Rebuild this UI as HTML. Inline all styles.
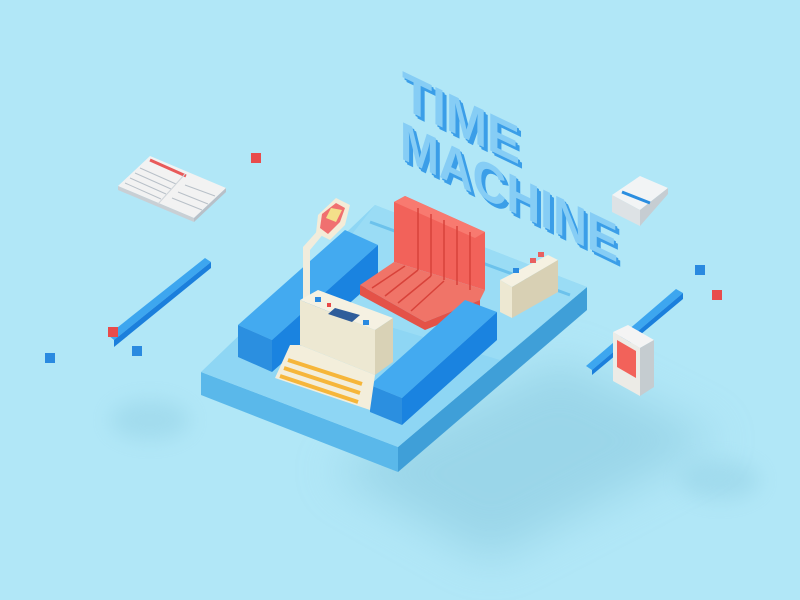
<!DOCTYPE html>
<html><head><meta charset="utf-8"><style>
html,body{margin:0;padding:0;width:800px;height:600px;overflow:hidden;background:#b1e7f7}
svg{display:block}
</style></head><body>
<svg width="800" height="600" viewBox="0 0 800 600" xmlns="http://www.w3.org/2000/svg">
<defs>
<filter id="b" x="-50%" y="-50%" width="200%" height="200%"><feGaussianBlur stdDeviation="22"/></filter>
<filter id="b2" x="-50%" y="-50%" width="200%" height="200%"><feGaussianBlur stdDeviation="10"/></filter>
</defs>
<rect width="800" height="600" fill="#b1e7f7"/>
<polygon points="330,470 560,360 720,440 490,560" fill="#8ccbe0" opacity="0.6" filter="url(#b)"/>
<ellipse cx="150" cy="420" rx="40" ry="20" fill="#8ccbe0" opacity="0.4" filter="url(#b2)"/>
<ellipse cx="720" cy="480" rx="40" ry="20" fill="#8ccbe0" opacity="0.4" filter="url(#b2)"/>

<polygon points="201,372 398,447 398,472 201,395" fill="#5ab8ea"/>
<polygon points="398,447 587,287 587,310 398,472" fill="#3f9fd8"/>
<polygon points="201,372 375,205 587,287 398,447" fill="#8ed6f4"/>
<polygon points="300,300 375,205 587,287 500,360" fill="#9adcf5"/>
<line x1="370" y1="222" x2="570" y2="295" stroke="#6cc2ec" stroke-width="3"/>

<polygon points="238,325 345,230 378,245 272,340" fill="#43aaf0"/>
<polygon points="238,325 272,340 272,372 238,357" fill="#2b8fe0"/>
<polygon points="272,340 378,245 378,278 272,372" fill="#1a83e0"/>

<polygon points="303,247 310,247 310,300 303,300" fill="#f1ecdc"/>
<polygon points="303,247 320,228 325,232 310,250" fill="#f1ecdc"/>
<polygon points="318,215 336,198 350,205 345,225 330,240 316,233" fill="#f4ecd8"/>
<polygon points="322,214 336,203 345,208 340,222 328,234 320,228" fill="#f07070"/>
<polygon points="331,208 342,210 336,222 326,218" fill="#f4e08a"/>

<polygon points="394,202 405,196 485,232 485,290 394,262" fill="#f2625a"/>
<polygon points="394,202 405,196 485,232 475,238" fill="#f87a70"/>
<polygon points="360,285 394,262 485,290 480,300 425,322" fill="#f07468"/>
<polygon points="360,285 425,322 425,330 360,295" fill="#e45248"/>
<polygon points="425,322 480,300 480,308 425,330" fill="#e45248"/>
<g stroke="#d8423a" stroke-width="1.5">
<line x1="418" y1="208" x2="418" y2="270"/><line x1="431" y1="214" x2="431" y2="276"/>
<line x1="444" y1="220" x2="444" y2="280"/><line x1="457" y1="226" x2="457" y2="285"/><line x1="470" y1="232" x2="470" y2="290"/>
<line x1="372" y1="288" x2="405" y2="266"/><line x1="385" y1="296" x2="418" y2="270"/><line x1="398" y1="303" x2="431" y2="276"/><line x1="411" y1="311" x2="444" y2="281"/>
</g>

<polygon points="370,385 465,300 497,312 402,398" fill="#43aaf0"/>
<polygon points="370,385 402,398 402,425 370,412" fill="#2b8fe0"/>
<polygon points="402,398 497,312 497,340 402,425" fill="#1a83e0"/>

<polygon points="300,300 318,290 393,318 375,330" fill="#f5f1e2"/>
<polygon points="300,300 375,330 375,375 300,345" fill="#ede8d2"/>
<polygon points="375,330 393,318 393,362 375,375" fill="#d9d2b6"/>
<polygon points="290,345 300,345 375,375 370,410 275,378" fill="#f3eedb"/>
<g stroke="#f6b63a" stroke-width="4">
<line x1="288" y1="360" x2="362" y2="384"/><line x1="284" y1="368" x2="360" y2="393"/><line x1="280" y1="376" x2="358" y2="402"/>
</g>
<polygon points="335,308 360,315 352,322 328,314" fill="#2f5d9a"/>
<rect x="315" y="297" width="6" height="5" fill="#2a8ae0"/>
<rect x="327" y="303" width="4" height="4" fill="#e84848"/>
<rect x="363" y="320" width="6" height="5" fill="#2a8ae0"/>

<polygon points="500,280 548,255 558,260 512,287" fill="#f5f1e2"/>
<polygon points="500,280 512,287 512,318 500,312" fill="#ede8d2"/>
<polygon points="512,287 558,260 558,292 512,318" fill="#d8d0b4"/>
<rect x="513" y="268" width="6" height="5" fill="#2a8ae0"/>
<rect x="530" y="258" width="6" height="5" fill="#e86060"/>
<rect x="538" y="252" width="6" height="5" fill="#e86060"/>

<g font-family="'Liberation Sans',sans-serif" font-weight="bold" font-size="54">
<text transform="matrix(1,0.48,0,1,402,108)" fill="#3b9ee8" x="4" y="3" textLength="118" lengthAdjust="spacingAndGlyphs">TIME</text>
<text transform="matrix(1,0.48,0,1,402,108)" fill="#3b9ee8" x="2" y="1.5" textLength="118" lengthAdjust="spacingAndGlyphs">TIME</text>
<text transform="matrix(1,0.48,0,1,402,108)" fill="#86cdf5" textLength="118" lengthAdjust="spacingAndGlyphs">TIME</text>
<text transform="matrix(1,0.48,0,1,400,158)" fill="#3b9ee8" x="4" y="3" textLength="218" lengthAdjust="spacingAndGlyphs">MACHINE</text>
<text transform="matrix(1,0.48,0,1,400,158)" fill="#3b9ee8" x="2" y="1.5" textLength="218" lengthAdjust="spacingAndGlyphs">MACHINE</text>
<text transform="matrix(1,0.48,0,1,400,158)" fill="#86cdf5" textLength="218" lengthAdjust="spacingAndGlyphs">MACHINE</text>
</g>

<polygon points="118,186 150,156 226,188 194,218" fill="#f2f2f2"/>
<polygon points="118,186 194,218 194,222 118,190" fill="#c9cfd4"/>
<polygon points="194,218 226,188 226,192 194,222" fill="#b8c0c8"/>
<line x1="150" y1="160" x2="186" y2="176" stroke="#e85a5a" stroke-width="3"/>
<g stroke="#b8c0c8" stroke-width="1">
<line x1="140" y1="168" x2="176" y2="184"/><line x1="135" y1="173" x2="171" y2="189"/><line x1="130" y1="178" x2="166" y2="194"/>
<line x1="125" y1="183" x2="161" y2="199"/><line x1="185" y1="185" x2="215" y2="196"/><line x1="178" y1="192" x2="208" y2="204"/><line x1="172" y1="198" x2="202" y2="210"/>
</g>
<line x1="185" y1="174" x2="158" y2="204" stroke="#cfd5da" stroke-width="1"/>

<polygon points="612,195 640,176 668,188 640,210" fill="#f2f4f5"/>
<polygon points="640,210 668,188 668,194 640,226" fill="#c6cdd2"/>
<polygon points="612,195 640,210 640,226 612,212" fill="#dde2e5"/>
<line x1="622" y1="192" x2="650" y2="203" stroke="#2b8ee0" stroke-width="3"/>

<polygon points="108,335 205,258 211,262 114,340" fill="#3da6ef"/>
<polygon points="114,340 211,262 211,268 114,347" fill="#1b7fdc"/>
<polygon points="586,366 676,289 683,293 592,370" fill="#3da6ef"/>
<polygon points="592,370 683,293 683,299 592,375" fill="#1b7fdc"/>

<polygon points="613,332 628,325 654,340 640,348" fill="#f4f4f4"/>
<polygon points="613,332 640,348 640,396 613,381" fill="#ecebe6"/>
<polygon points="640,348 654,340 654,387 640,396" fill="#c5ccd0"/>
<polygon points="617,340 636,351 636,378 617,367" fill="#f2625a"/>

<rect x="251" y="153" width="10" height="10" fill="#e84c4c"/>
<rect x="108" y="327" width="10" height="10" fill="#e84c4c"/>
<rect x="132" y="346" width="10" height="10" fill="#2a8ae0"/>
<rect x="45" y="353" width="10" height="10" fill="#2a8ae0"/>
<rect x="695" y="265" width="10" height="10" fill="#2a8ae0"/>
<rect x="712" y="290" width="10" height="10" fill="#e84c4c"/>
</svg>
</body></html>
